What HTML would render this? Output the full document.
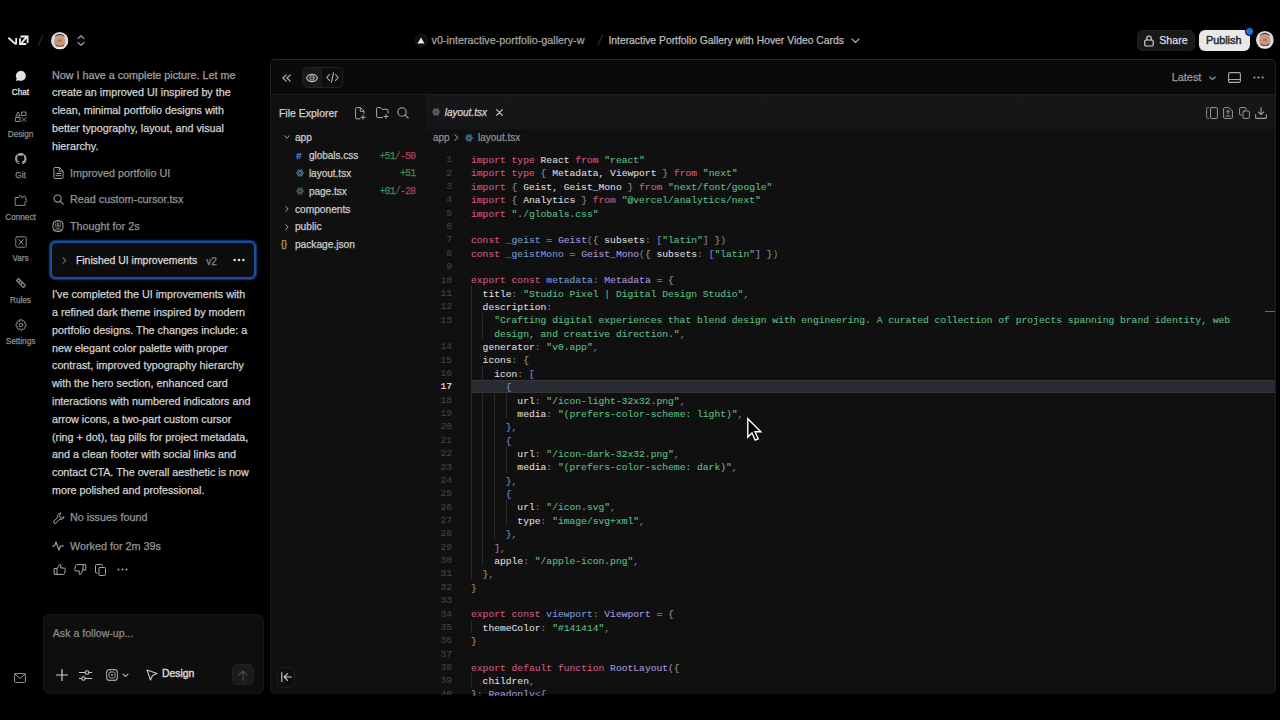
<!DOCTYPE html>
<html><head><meta charset="utf-8">
<style>
*{margin:0;padding:0;box-sizing:border-box}
html,body{width:1280px;height:720px;overflow:hidden;background:#000;font-family:"Liberation Sans",sans-serif;color:#d6d6d6}
body div{-webkit-text-stroke:0.25px currentColor}
.a{position:absolute;white-space:nowrap;line-height:1}
svg.i{position:absolute;overflow:visible;fill:none;stroke-linecap:round;stroke-linejoin:round}
.nav{position:absolute;left:0;width:41px;text-align:center;font-size:8.2px;line-height:1;color:#8c8c8c}
.chat{position:absolute;left:52px;font-size:10.75px;line-height:17.8px;color:#d2d2d2;white-space:nowrap}
.tl{position:absolute;left:70px;font-size:10.8px;line-height:1;color:#949494;white-space:nowrap}
.panel{position:absolute;left:269.5px;top:59px;width:1006px;height:635px;background:#0a0a0b;border-radius:5px;overflow:hidden;border:1px solid #1e1e1f;border-top-color:#2a2a2b}
.code{position:absolute;left:471px;top:154.1px;font-family:"Liberation Mono",monospace;font-size:9.66px;line-height:13.36px;color:#d9d9d9}
.code div{height:13.36px;white-space:pre}
.ln{position:absolute;left:412px;width:40px;top:153.3px;font-family:"Liberation Mono",monospace;font-size:9.66px;line-height:13.36px;color:#424244;text-align:right}
.ln div{height:13.36px}
.code,.ln{height:541.5px;overflow:hidden}
.o{color:#9a88c0}.b{color:#b0946a}.q{color:#8d80c4}.m{color:#8a90a0}.n{color:#7d8ad2}.ln .act{color:#e8e8e8}
.k{color:#cc5883}.s{color:#5bbd82}.p{color:#7e7e82}.v{color:#7399d2}.t{color:#a993dc}
.code div,.ln div,.code,.ln{-webkit-text-stroke:0.12px currentColor}
.fe{position:absolute;font-size:10px;line-height:1;color:#cdcdcd;white-space:nowrap}
.dif{position:absolute;font-family:"Liberation Mono",monospace;font-size:10px;letter-spacing:-0.9px;line-height:1;white-space:nowrap;color:#5a5a5a}
.g{color:#3f8756}.r{color:#ad4058}
.guide{position:absolute;width:1px;background:#2a2a2c}
</style></head>
<body>
<!-- HEADER LEFT -->
<svg class="i" style="left:8px;top:35px" width="21" height="11" viewBox="0 0 21 11">
  <path d="M0.4 2.8 L7.9 9.4 M8.2 2.9 V9.6" stroke="#ececec" stroke-width="1.8" stroke-linecap="butt" stroke-linejoin="miter"/>
  <path d="M12.4 1.5 H19.6 V8 M12 3.2 V9 H18.2 M13.6 7.9 L18.4 2.3" stroke="#ececec" stroke-width="1.8" stroke-linecap="butt" stroke-linejoin="miter"/>
</svg>
<svg class="i" style="left:37px;top:35px" width="8" height="11"><path d="M5.8 1 L1.3 10.3" stroke="#2e2e2e" stroke-width="1.1"/></svg>
<svg class="i" style="left:50.599999999999994px;top:31.500000000000004px" width="17.4" height="17.4" viewBox="0 0 20 20"><defs><clipPath id="c59"><circle cx="10" cy="10" r="10"/></clipPath></defs><g clip-path="url(#c59)"><rect width="20" height="20" fill="#dcdcdc"/><ellipse cx="10" cy="11" rx="6.5" ry="8" fill="#c8977c"/><path d="M4 6 Q10 1 16 6 L15 4 Q10 0 5 4 Z" fill="#4a3430"/><path d="M6 15 Q10 18 14 15" stroke="#5a3a34" stroke-width="1.2" fill="none"/><ellipse cx="10" cy="10" rx="2.5" ry="1.5" fill="#a87a66"/><rect x="0" y="17" width="20" height="3" fill="#e8e8e8"/></g></svg>
<svg class="i" style="left:77px;top:35px" width="8" height="11" viewBox="0 0 8 11"><path d="M1 3.5 L4 0.8 L7 3.5 M1 7.5 L4 10.2 L7 7.5" stroke="#9a9a9a" stroke-width="1.2"/></svg>

<!-- HEADER CENTER -->
<div class="a" style="left:414.5px;top:33.5px;width:13px;height:13px;border-radius:50%;background:#0d0d0d;border:1px solid #1e1e1e"></div>
<svg class="i" style="left:417px;top:36.5px" width="8" height="7" viewBox="0 0 8 7"><path d="M4 0.5 L7.5 6.5 H0.5 Z" fill="#eaeaea"/></svg>
<div class="a" style="left:431.5px;top:35.3px;font-size:10.8px;color:#a3a3a3">v0-interactive-portfolio-gallery-w</div>
<svg class="i" style="left:596px;top:34px" width="8" height="12"><path d="M6.5 1 L2 11" stroke="#2e2e2e" stroke-width="1.1"/></svg>
<div class="a" style="left:608.4px;top:36.2px;font-size:10.35px;color:#bdbdbd">Interactive Portfolio Gallery with Hover Video Cards</div>
<svg class="i" style="left:851px;top:38px" width="9" height="6" viewBox="0 0 9 6"><path d="M1 1 L4.5 4.5 L8 1" stroke="#a8a8a8" stroke-width="1.2"/></svg>

<!-- HEADER RIGHT -->
<div class="a" style="left:1136.5px;top:30.3px;width:58.5px;height:20.5px;border-radius:6px;background:#191919;border:1px solid #222"></div>
<svg class="i" style="left:1144px;top:35px" width="10" height="12" viewBox="0 0 10 12"><rect x="0.8" y="5" width="8.4" height="6" rx="1.2" stroke="#d0d0d0" stroke-width="1.2"/><path d="M2.8 5 V3.2 A2.2 2.2 0 0 1 7.2 3.2 V5" stroke="#d0d0d0" stroke-width="1.2"/></svg>
<div class="a" style="left:1159.3px;top:35.3px;font-size:10.6px;color:#dedede">Share</div>
<div class="a" style="left:1199px;top:30.3px;width:51px;height:20.5px;border-radius:6px;background:#e9e9e9"></div>
<div class="a" style="left:1206px;top:35.3px;font-size:10.8px;color:#2e2e2e;-webkit-text-stroke:0.5px #2e2e2e">Publish</div>
<div class="a" style="left:1245.3px;top:27.3px;width:8.5px;height:8.5px;border-radius:50%;background:#1f6fe5;border:1.2px solid #000"></div>
<svg class="i" style="left:1255.8999999999999px;top:31.300000000000004px" width="17.8" height="17.8" viewBox="0 0 20 20"><defs><clipPath id="c1264"><circle cx="10" cy="10" r="10"/></clipPath></defs><g clip-path="url(#c1264)"><rect width="20" height="20" fill="#dcdcdc"/><ellipse cx="10" cy="11" rx="6.5" ry="8" fill="#c8977c"/><path d="M4 6 Q10 1 16 6 L15 4 Q10 0 5 4 Z" fill="#4a3430"/><path d="M6 15 Q10 18 14 15" stroke="#5a3a34" stroke-width="1.2" fill="none"/><ellipse cx="10" cy="10" rx="2.5" ry="1.5" fill="#a87a66"/><rect x="0" y="17" width="20" height="3" fill="#e8e8e8"/></g></svg>

<!-- NAV -->
<svg class="i" style="left:15px;top:69.5px" width="12" height="12" viewBox="0 0 12 12"><path d="M6 0.8 A5.2 5 0 1 1 3.2 10.2 L0.9 11 L1.6 8.5 A5.2 5 0 0 1 6 0.8 Z" fill="#e4e4e4"/></svg>
<div class="nav" style="top:88.7px;color:#e6e6e6">Chat</div>
<svg class="i" style="left:14.5px;top:111px" width="12" height="12" viewBox="0 0 12 12"><path d="M1 4.5 L3 1 L5 4.5 Z M7 1 H11 V4.5 H7 Z M1 6.5 H5 V10.5 H1 Z M7 6.5 L11 10.5 M11 6.5 L7 10.5" stroke="#8a8a8a" stroke-width="1"/></svg>
<div class="nav" style="top:130.5px">Design</div>
<svg class="i" style="left:14.8px;top:152.8px" width="11.5" height="11.5" viewBox="0 0 16 16"><path fill-rule="evenodd" fill="#a0a0a0" d="M8 0C3.58 0 0 3.58 0 8c0 3.54 2.29 6.53 5.47 7.59.4.07.55-.17.55-.38 0-.19-.01-.82-.01-1.49-2.01.37-2.53-.49-2.69-.94-.09-.23-.48-.94-.82-1.130-.28-.15-.68-.52-.01-.53.63-.01 1.08.58 1.23.82.72 1.21 1.87.87 2.33.66.07-.52.28-.87.51-1.07-1.78-.2-3.640-.89-3.64-3.95 0-.87.31-1.590.82-2.15-.08-.2-.36-1.02.08-2.12 0 0 .67-.21 2.2.82.64-.18 1.32-.27 2-.27.68 0 1.36.09 2 .27 1.53-1.04 2.2-.82 2.2-.82.44 1.1.16 1.92.08 2.12.51.56.82 1.27.82 2.15 0 3.07-1.87 3.75-3.65 3.95.29.25.54.73.54 1.48 0 1.07-.01 1.93-.01 2.2 0 .21.15.46.55.38A8.013 8.013 0 0016 8c0-4.42-3.58-8-8-8z"/></svg>
<div class="nav" style="top:172.2px">Git</div>
<svg class="i" style="left:15px;top:194.5px" width="12" height="11" viewBox="0 0 12 11"><path d="M0.6 2.5 H4 V1.8 A1.3 1.3 0 0 1 6.6 1.8 V2.5 H8 L9 0.8 L11.2 2.8 L10 4.2 H10.4 A1.3 1.3 0 0 1 10.4 6.8 H10 V10.4 H0.6 Z" stroke="#8a8a8a" stroke-width="1"/></svg>
<div class="nav" style="top:213.7px">Connect</div>
<svg class="i" style="left:14.5px;top:235.5px" width="12" height="12" viewBox="0 0 12 12"><rect x="0.8" y="0.8" width="10.4" height="10.4" rx="1.5" stroke="#8a8a8a" stroke-width="1"/><path d="M3.8 3.5 L8.2 8.5 M8.2 3.5 L3.8 8.5" stroke="#8a8a8a" stroke-width="1"/></svg>
<div class="nav" style="top:255.2px">Vars</div>
<svg class="i" style="left:14.5px;top:277px" width="12" height="12" viewBox="0 0 12 12"><path d="M1.5 3.5 L3.5 1.5 L10.5 8.5 L8.5 10.5 Z M4 5 L5 4 M6 7 L7 6" stroke="#8a8a8a" stroke-width="1.1"/></svg>
<div class="nav" style="top:296.7px">Rules</div>
<svg class="i" style="left:14.5px;top:319px" width="12" height="12" viewBox="0 0 12 12"><circle cx="6" cy="6" r="1.8" stroke="#8a8a8a" stroke-width="1"/><path d="M5 0.8 H7 L7.4 2.3 L8.7 1.6 L10.2 3.1 L9.5 4.4 L11 4.9 V7 L9.5 7.5 L10.2 8.9 L8.8 10.3 L7.4 9.6 L7 11.1 H5 L4.6 9.6 L3.2 10.3 L1.8 8.9 L2.5 7.5 L1 7 V5 L2.5 4.5 L1.8 3.1 L3.2 1.7 L4.6 2.4 Z" stroke="#8a8a8a" stroke-width="1"/></svg>
<div class="nav" style="top:338.2px">Settings</div>
<svg class="i" style="left:14px;top:672.5px" width="12" height="10" viewBox="0 0 12 10"><rect x="0.6" y="0.6" width="10.8" height="8.8" rx="1" stroke="#9a9a9a" stroke-width="1"/><path d="M0.8 1 L6 5.5 L11.2 1" stroke="#9a9a9a" stroke-width="1"/></svg>

<!-- CHAT -->
<div class="chat" style="top:66.5px">Now I have a complete picture. Let me<br>create an improved UI inspired by the<br>clean, minimal portfolio designs with<br>better typography, layout, and visual<br>hierarchy.</div>
<div class="a" style="left:40px;top:59px;width:230px;height:30px;background:linear-gradient(#000 0%,rgba(0,0,0,0.35) 40%,rgba(0,0,0,0) 100%)"></div>

<svg class="i" style="left:52.5px;top:167px" width="11" height="12" viewBox="0 0 11 12"><path d="M1 1.2 A0.8 0.8 0 0 1 1.8 0.5 H6.5 L10 4 V10.8 A0.8 0.8 0 0 1 9.2 11.5 H1.8 A0.8 0.8 0 0 1 1 10.8 Z M6.3 0.6 V4.2 H9.9 M3 6.5 H8 M3 8.7 H8" stroke="#a0a0a0" stroke-width="1"/></svg>
<div class="tl" style="top:167.5px">Improved portfolio UI</div>
<svg class="i" style="left:52.5px;top:194px" width="11" height="11" viewBox="0 0 11 11"><circle cx="4.6" cy="4.6" r="3.6" stroke="#a0a0a0" stroke-width="1.1"/><path d="M7.3 7.3 L10.2 10.2" stroke="#a0a0a0" stroke-width="1.1"/></svg>
<div class="tl" style="top:194px">Read custom-cursor.tsx</div>
<svg class="i" style="left:52.2px;top:220px" width="12" height="12" viewBox="0 0 12 12"><path d="M3.5 1.2 Q6 -0.2 8.5 1.2 Q11 2 10.8 4.6 Q11.8 6.5 10.6 8.4 Q10.2 11 7.6 11.2 Q6 12 4.4 11.2 Q1.6 11 1.3 8.4 Q0.2 6.5 1.2 4.6 Q1 2 3.5 1.2 Z" stroke="#a0a0a0" stroke-width="1.05"/><path d="M6 1.5 V5 Q5 6.5 3.2 6.2 M6 5 Q7.2 6.8 8.8 6.4 M4 3.2 Q4.5 4.5 3.4 5 M8 3.2 Q7.5 4.5 8.6 5 M6 6.5 V10.5 M4.2 8.2 Q4.6 9.5 3.6 10.2 M7.8 8.2 Q7.4 9.5 8.4 10.2" stroke="#a0a0a0" stroke-width="0.9"/></svg>
<div class="tl" style="top:221.2px">Thought for 2s</div>

<div class="a" style="left:49.8px;top:241px;width:206px;height:37.5px;border-radius:6px;border:2px solid #1a4fa0;background:#0d0d0e;box-shadow:0 0 1.5px 0.5px #123d7c"></div>
<svg class="i" style="left:61.5px;top:256.5px" width="5" height="7" viewBox="0 0 5 7"><path d="M1 0.8 L4 3.5 L1 6.2" stroke="#9a9a9a" stroke-width="1"/></svg>
<div class="a" style="left:75.9px;top:256px;font-size:10.45px;color:#dadada">Finished UI improvements</div>
<div class="a" style="left:206.2px;top:256.5px;font-size:10px;color:#858585">v2</div>
<svg class="i" style="left:232.5px;top:258px" width="12" height="4" viewBox="0 0 12 4"><circle cx="1.6" cy="2" r="1.3" fill="#e0e0e0"/><circle cx="6" cy="2" r="1.3" fill="#e0e0e0"/><circle cx="10.4" cy="2" r="1.3" fill="#e0e0e0"/></svg>

<div class="chat" style="top:286.3px">I've completed the UI improvements with<br>a refined dark theme inspired by modern<br>portfolio designs. The changes include: a<br>new elegant color palette with proper<br>contrast, improved typography hierarchy<br>with the hero section, enhanced card<br>interactions with numbered indicators and<br>arrow icons, a two-part custom cursor<br>(ring + dot), tag pills for project metadata,<br>and a clean footer with social links and<br>contact CTA. The overall aesthetic is now<br>more polished and professional.</div>

<svg class="i" style="left:52.5px;top:511.5px" width="12" height="12" viewBox="0 0 12 12"><path d="M7.5 1 A3 3 0 0 0 4.8 5.2 L1 9 A1.4 1.4 0 0 0 3 11 L6.8 7.2 A3 3 0 0 0 11 4.5 L9.2 6 L7.2 5.8 L6.8 3.4 Z" stroke="#a0a0a0" stroke-width="1"/></svg>
<div class="tl" style="top:512.3px">No issues found</div>
<svg class="i" style="left:52px;top:540.5px" width="12" height="10" viewBox="0 0 12 10"><path d="M0.5 5 H2.5 L4 1 L7 9 L8.5 5 H11.5" stroke="#a8a8a8" stroke-width="1.1"/></svg>
<div class="tl" style="top:540.5px">Worked for 2m 39s</div>

<svg class="i" style="left:53.5px;top:563.5px" width="12" height="11" viewBox="0 0 12 11"><path d="M0.6 4.5 H3 V10.4 H0.6 Z M3 4.5 L5.5 0.6 A1.2 1.2 0 0 1 7 1.8 L6.5 4 H10 A1.3 1.3 0 0 1 11.3 5.5 L10.5 9.5 A1.2 1.2 0 0 1 9.3 10.4 H3" stroke="#a8a8a8" stroke-width="1"/></svg>
<svg class="i" style="left:74px;top:564px" width="12" height="11" viewBox="0 0 12 11"><path d="M11.4 6 H9 V0.6 H11.4 Z M9 6 L6.5 10.4 A1.2 1.2 0 0 1 5 9.2 L5.5 7 H2 A1.3 1.3 0 0 1 0.7 5.5 L1.5 1.5 A1.2 1.2 0 0 1 2.7 0.6 H9" stroke="#a8a8a8" stroke-width="1"/></svg>
<svg class="i" style="left:95px;top:563.5px" width="12" height="12" viewBox="0 0 12 12"><rect x="4" y="3.5" width="6.5" height="8" rx="1" stroke="#a8a8a8" stroke-width="1"/><path d="M7.5 1.8 V1.5 A1 1 0 0 0 6.5 0.5 H1.5 A1 1 0 0 0 0.5 1.5 V8 A1 1 0 0 0 1.5 9 H2.5" stroke="#a8a8a8" stroke-width="1"/></svg>
<svg class="i" style="left:116.5px;top:567.5px" width="11" height="3" viewBox="0 0 11 3"><circle cx="1.5" cy="1.5" r="1" fill="#a8a8a8"/><circle cx="5.5" cy="1.5" r="1" fill="#a8a8a8"/><circle cx="9.5" cy="1.5" r="1" fill="#a8a8a8"/></svg>

<!-- INPUT -->
<div class="a" style="left:43px;top:614.3px;width:221px;height:79.5px;border-radius:6px;background:#0e0e0f;border:1px solid #171718"></div>
<div class="a" style="left:52.8px;top:627.5px;font-size:10.6px;color:#8a8a8a">Ask a follow-up...</div>
<svg class="i" style="left:56px;top:669px" width="12" height="12" viewBox="0 0 12 12"><path d="M6 0.5 V11.5 M0.5 6 H11.5" stroke="#d0d0d0" stroke-width="1.2"/></svg>
<svg class="i" style="left:79px;top:668.5px" width="13" height="13" viewBox="0 0 13 13"><path d="M0.5 3.5 H12.5 M0.5 9.5 H12.5" stroke="#c8c8c8" stroke-width="1.1"/><circle cx="8" cy="3.5" r="1.8" fill="#0e0e0f" stroke="#c8c8c8" stroke-width="1.1"/><circle cx="4.5" cy="9.5" r="1.8" fill="#0e0e0f" stroke="#c8c8c8" stroke-width="1.1"/></svg>
<svg class="i" style="left:105.5px;top:668.5px" width="12" height="12" viewBox="0 0 12 12"><rect x="0.6" y="0.6" width="10.8" height="10.8" rx="3" stroke="#a0a0a0" stroke-width="1.1"/><rect x="3" y="3" width="6" height="6" rx="1.5" stroke="#a0a0a0" stroke-width="1"/><circle cx="6" cy="6" r="1" fill="#a0a0a0"/></svg>
<svg class="i" style="left:121.5px;top:672.5px" width="7" height="5" viewBox="0 0 7 5"><path d="M1 1 L3.5 3.5 L6 1" stroke="#a0a0a0" stroke-width="1.1"/></svg>
<svg class="i" style="left:145.5px;top:668.5px" width="12" height="12" viewBox="0 0 12 12"><path d="M1 1 L11 4.5 L6.5 6.5 L4.5 11 Z" stroke="#c8c8c8" stroke-width="1.1"/></svg>
<div class="a" style="left:161.9px;top:669.3px;font-size:10.45px;color:#d4d4d4;-webkit-text-stroke:0.45px #d4d4d4">Design</div>
<div class="a" style="left:232px;top:664.3px;width:22px;height:21px;border-radius:5px;background:#1b1b1c;border:1px solid #222"></div>
<svg class="i" style="left:238px;top:669.5px" width="10" height="11" viewBox="0 0 10 11"><path d="M5 10.5 V1 M1 5 L5 1 L9 5" stroke="#4a4a4a" stroke-width="1.2"/></svg>

<!-- PANEL -->
<div class="panel"></div>
<div class="a" style="left:270.5px;top:93.5px;width:1004.5px;height:600px;background:#101011;border-top:1px solid #1c1c1e;border-radius:0 0 5px 5px"></div>
<div class="a" style="left:426px;top:94.5px;width:849px;height:599px;background:#101011;border-radius:0 0 5px 0"></div>
<div class="a" style="left:426px;top:94.5px;width:849px;height:35px;background:linear-gradient(#171719,#141416)"></div>

<!-- toolbar -->
<svg class="i" style="left:281.5px;top:73.5px" width="9" height="8" viewBox="0 0 9 8"><path d="M4.2 0.8 L1 4 L4.2 7.2 M8.2 0.8 L5 4 L8.2 7.2" stroke="#b8b8b8" stroke-width="1.1"/></svg>
<div class="a" style="left:301.8px;top:67px;width:41.5px;height:20.5px;border-radius:5px;border:1px solid #222224;background:#0d0d0e"></div>
<div class="a" style="left:302.8px;top:68px;width:19.5px;height:18.5px;border-radius:4px 0 0 4px;background:#19191a"></div>
<svg class="i" style="left:305.5px;top:72.6px" width="12" height="10" viewBox="0 0 12 10"><path d="M0.6 5 C2.5 0.2 9.5 0.2 11.4 5 C9.5 9.8 2.5 9.8 0.6 5 Z" stroke="#bdbdbd" stroke-width="1.1"/><circle cx="6" cy="5" r="2.2" stroke="#bdbdbd" stroke-width="1"/><circle cx="6" cy="5" r="0.6" fill="#bdbdbd"/></svg>
<svg class="i" style="left:326px;top:72px" width="13" height="11" viewBox="0 0 13 11"><path d="M3.5 2.5 L0.8 5.5 L3.5 8.5 M9.5 2.5 L12.2 5.5 L9.5 8.5 M7.5 0.8 L5.5 10.2" stroke="#b8b8b8" stroke-width="1.1"/></svg>

<div class="a" style="left:1171.7px;top:72.3px;font-size:10.9px;color:#9c9c9c">Latest</div>
<svg class="i" style="left:1208.5px;top:75.5px" width="7" height="5" viewBox="0 0 7 5"><path d="M0.8 1 L3.5 3.7 L6.2 1" stroke="#a0a0a0" stroke-width="1.1"/></svg>
<svg class="i" style="left:1228.3px;top:72px" width="13" height="11" viewBox="0 0 13 11"><rect x="0.6" y="0.6" width="11.8" height="9.8" rx="1.4" stroke="#a8a8a8" stroke-width="1.1"/><path d="M0.8 7.5 H12.2" stroke="#a8a8a8" stroke-width="1.1"/></svg>
<svg class="i" style="left:1252.8px;top:75.8px" width="11" height="3" viewBox="0 0 11 3"><circle cx="1.4" cy="1.5" r="1.05" fill="#a8a8a8"/><circle cx="5.5" cy="1.5" r="1.05" fill="#a8a8a8"/><circle cx="9.6" cy="1.5" r="1.05" fill="#a8a8a8"/></svg>

<!-- file explorer -->
<div class="a" style="left:278.9px;top:107.5px;font-size:10.5px;color:#d2d2d2">File Explorer</div>
<svg class="i" style="left:355px;top:106.5px" width="11" height="13" viewBox="0 0 11 13"><path d="M5 11.8 H1.5 A0.9 0.9 0 0 1 0.6 10.9 V1.5 A0.9 0.9 0 0 1 1.5 0.6 H5.5 L9 4.1 V6.5 M5.3 0.8 V4.3 H8.8 M8 8.3 V12.3 M6 10.3 H10" stroke="#a8a8a8" stroke-width="1"/></svg>
<svg class="i" style="left:375.5px;top:107px" width="13" height="12" viewBox="0 0 13 12"><path d="M6.5 10.5 H1.5 A0.9 0.9 0 0 1 0.6 9.6 V1.5 A0.9 0.9 0 0 1 1.5 0.6 H4.5 L6 2.3 H11 A0.9 0.9 0 0 1 11.9 3.2 V6 M10 7.5 V11.5 M8 9.5 H12" stroke="#a8a8a8" stroke-width="1"/></svg>
<svg class="i" style="left:397px;top:106.5px" width="12" height="12" viewBox="0 0 12 12"><circle cx="5" cy="5" r="4.2" stroke="#a8a8a8" stroke-width="1.1"/><path d="M8.1 8.1 L11.2 11.2" stroke="#a8a8a8" stroke-width="1.1"/></svg>

<svg class="i" style="left:284.4px;top:135px" width="6" height="4" viewBox="0 0 6 4"><path d="M0.6 0.7 L3 3.2 L5.4 0.7" stroke="#a0a0a0" stroke-width="1"/></svg>
<div class="fe" style="left:294.9px;top:133.2px;font-size:10.2px">app</div>

<div class="a" style="left:296px;top:150.6px;font-size:9.5px;font-weight:bold;color:#4f86b8;font-style:italic">#</div>
<div class="fe" style="left:308.9px;top:151.2px">globals.css</div>
<div class="dif" style="left:379.5px;top:151.5px"><span class="g">+51</span>/<span class="r">-50</span></div>

<svg class="i" style="left:296px;top:169px" width="8" height="8" viewBox="0 0 8 8"><ellipse cx="4" cy="4" rx="3.6" ry="1.4" stroke="#4d7f98" stroke-width="0.8"/><ellipse cx="4" cy="4" rx="3.6" ry="1.4" transform="rotate(60 4 4)" stroke="#4d7f98" stroke-width="0.8"/><ellipse cx="4" cy="4" rx="3.6" ry="1.4" transform="rotate(-60 4 4)" stroke="#4d7f98" stroke-width="0.8"/></svg>
<div class="fe" style="left:308.9px;top:169px">layout.tsx</div>
<div class="dif" style="left:400px;top:169.3px"><span class="g">+51</span></div>

<svg class="i" style="left:296px;top:187px" width="8" height="8" viewBox="0 0 8 8"><ellipse cx="4" cy="4" rx="3.6" ry="1.4" stroke="#4a6a78" stroke-width="0.8"/><ellipse cx="4" cy="4" rx="3.6" ry="1.4" transform="rotate(60 4 4)" stroke="#4a6a78" stroke-width="0.8"/><ellipse cx="4" cy="4" rx="3.6" ry="1.4" transform="rotate(-60 4 4)" stroke="#4a6a78" stroke-width="0.8"/></svg>
<div class="fe" style="left:308.9px;top:186.8px">page.tsx</div>
<div class="dif" style="left:379.5px;top:187.1px"><span class="g">+81</span>/<span class="r">-28</span></div>

<svg class="i" style="left:285px;top:206px" width="4" height="6" viewBox="0 0 4 6"><path d="M0.7 0.6 L3.2 3 L0.7 5.4" stroke="#a0a0a0" stroke-width="1"/></svg>
<div class="fe" style="left:294.9px;top:204.6px;font-size:10.2px">components</div>
<svg class="i" style="left:285px;top:223.7px" width="4" height="6" viewBox="0 0 4 6"><path d="M0.7 0.6 L3.2 3 L0.7 5.4" stroke="#a0a0a0" stroke-width="1"/></svg>
<div class="fe" style="left:294.9px;top:222.3px;font-size:10.2px">public</div>
<div class="a" style="left:281px;top:239.5px;font-size:9px;color:#c8a548">{}</div>
<div class="fe" style="left:294.9px;top:240.1px;font-size:10.2px">package.json</div>

<!-- tabs -->
<svg class="i" style="left:432px;top:108px" width="8" height="8" viewBox="0 0 8 8"><ellipse cx="4" cy="4" rx="3.6" ry="1.4" stroke="#6a7a80" stroke-width="0.8"/><ellipse cx="4" cy="4" rx="3.6" ry="1.4" transform="rotate(60 4 4)" stroke="#6a7a80" stroke-width="0.8"/><ellipse cx="4" cy="4" rx="3.6" ry="1.4" transform="rotate(-60 4 4)" stroke="#6a7a80" stroke-width="0.8"/></svg>
<div class="a" style="left:444.7px;top:107.5px;font-size:10px;font-style:italic;color:#d4d4d4">layout.tsx</div>
<svg class="i" style="left:495.5px;top:108.5px" width="7" height="7" viewBox="0 0 7 7"><path d="M0.6 0.6 L6.4 6.4 M6.4 0.6 L0.6 6.4" stroke="#cfcfcf" stroke-width="1.1"/></svg>

<svg class="i" style="left:1206px;top:106.5px" width="12" height="12" viewBox="0 0 12 12"><rect x="4.5" y="0.6" width="6.9" height="10.8" rx="1.2" stroke="#9a9a9a" stroke-width="1"/><path d="M2.5 0.6 H1.6 A1 1 0 0 0 0.6 1.6 V10.4 A1 1 0 0 0 1.6 11.4 H2.5" stroke="#9a9a9a" stroke-width="1" stroke-dasharray="1.5 1"/></svg>
<svg class="i" style="left:1223px;top:106.5px" width="10" height="12" viewBox="0 0 10 12"><path d="M0.6 1.5 A0.9 0.9 0 0 1 1.5 0.6 H6 L9.4 4 V10.5 A0.9 0.9 0 0 1 8.5 11.4 H1.5 A0.9 0.9 0 0 1 0.6 10.5 Z M5 3.5 V7 M3.3 5 L5 3.3 L6.7 5 M3 9 H7" stroke="#9a9a9a" stroke-width="1"/></svg>
<svg class="i" style="left:1239px;top:106.5px" width="11" height="12" viewBox="0 0 11 12"><rect x="4" y="4" width="6.4" height="7.4" rx="1" stroke="#9a9a9a" stroke-width="1"/><path d="M7 2.5 V1.6 A1 1 0 0 0 6 0.6 H1.6 A1 1 0 0 0 0.6 1.6 V7 A1 1 0 0 0 1.6 8 H2.5" stroke="#9a9a9a" stroke-width="1"/></svg>
<svg class="i" style="left:1255px;top:106.5px" width="12" height="12" viewBox="0 0 12 12"><path d="M6 0.6 V7.5 M3.3 5 L6 7.7 L8.7 5 M0.6 7.5 V10.4 A1 1 0 0 0 1.6 11.4 H10.4 A1 1 0 0 0 11.4 10.4 V7.5" stroke="#9a9a9a" stroke-width="1.1"/></svg>

<!-- breadcrumb -->
<div class="a" style="left:433px;top:132.5px;font-size:10px;color:#8e8e8e">app</div>
<svg class="i" style="left:453.8px;top:134px" width="5" height="7" viewBox="0 0 5 7"><path d="M0.8 0.8 L4 3.5 L0.8 6.2" stroke="#a0a0a0" stroke-width="1"/></svg>
<svg class="i" style="left:465px;top:133.5px" width="8" height="8" viewBox="0 0 8 8"><ellipse cx="4" cy="4" rx="3.6" ry="1.4" stroke="#4d7f98" stroke-width="0.8"/><ellipse cx="4" cy="4" rx="3.6" ry="1.4" transform="rotate(60 4 4)" stroke="#4d7f98" stroke-width="0.8"/><ellipse cx="4" cy="4" rx="3.6" ry="1.4" transform="rotate(-60 4 4)" stroke="#4d7f98" stroke-width="0.8"/></svg>
<div class="a" style="left:478px;top:132.5px;font-size:10px;color:#8e8e8e">layout.tsx</div>

<!-- active line + guides -->
<div class="a" style="left:471px;top:379.5px;width:804px;height:13.3px;background:#282b32;border-top:1px solid #37373a;border-bottom:1px solid #343437"></div>
<div class="guide" style="left:472.3px;top:446px;height:0"></div>
<div class="guide" style="left:470.8px;top:285.90px;height:293.92px"></div>
<div class="guide" style="left:470.8px;top:619.90px;height:13.36px"></div>
<div class="guide" style="left:470.8px;top:673.34px;height:13.36px"></div>
<div class="guide" style="left:482.4px;top:312.62px;height:26.72px"></div>
<div class="guide" style="left:482.4px;top:366.06px;height:200.40px"></div>
<div class="guide" style="left:494.0px;top:379.42px;height:160.32px"></div>
<div class="guide" style="left:505.6px;top:392.78px;height:26.72px"></div>
<div class="guide" style="left:505.6px;top:446.22px;height:26.72px"></div>
<div class="guide" style="left:505.6px;top:499.66px;height:26.72px"></div>
<div class="code">
<div><span class="k">import</span> <span class="k">type</span> React <span class="k">from</span> <span class="s">"react"</span></div>
<div><span class="k">import</span> <span class="k">type</span> <span class="m">{</span> Metadata, Viewport <span class="m">}</span> <span class="k">from</span> <span class="s">"next"</span></div>
<div><span class="k">import</span> <span class="m">{</span> Geist, Geist_Mono <span class="m">}</span> <span class="k">from</span> <span class="s">"next/font/google"</span></div>
<div><span class="k">import</span> <span class="m">{</span> Analytics <span class="m">}</span> <span class="k">from</span> <span class="s">"@vercel/analytics/next"</span></div>
<div><span class="k">import</span> <span class="s">"./globals.css"</span></div>
<div></div>
<div><span class="k">const</span> <span class="v">_geist</span> <span class="k">=</span> <span class="t">Geist</span><span class="p">(</span><span class="b">{</span> subsets<span class="p">:</span> <span class="q">[</span><span class="s">"latin"</span><span class="q">]</span> <span class="b">}</span><span class="p">)</span></div>
<div><span class="k">const</span> <span class="v">_geistMono</span> <span class="k">=</span> <span class="t">Geist_Mono</span><span class="p">(</span><span class="b">{</span> subsets<span class="p">:</span> <span class="q">[</span><span class="s">"latin"</span><span class="q">]</span> <span class="b">}</span><span class="p">)</span></div>
<div></div>
<div><span class="k">export</span> <span class="k">const</span> <span class="v">metadata</span><span class="p">:</span> <span class="t">Metadata</span> <span class="k">=</span> <span class="b">{</span></div>
<div>  title<span class="p">:</span> <span class="s">"Studio Pixel | Digital Design Studio"</span><span class="p">,</span></div>
<div>  description<span class="p">:</span></div>
<div>    <span class="s">"Crafting digital experiences that blend design with engineering. A curated collection of projects spanning brand identity, web</span></div>
<div>    <span class="s">design, and creative direction."</span><span class="p">,</span></div>
<div>  generator<span class="p">:</span> <span class="s">"v0.app"</span><span class="p">,</span></div>
<div>  icons<span class="p">:</span> <span class="b">{</span></div>
<div>    icon<span class="p">:</span> <span class="q">[</span></div>
<div>      <span class="n">{</span></div>
<div>        url<span class="p">:</span> <span class="s">"/icon-light-32x32.png"</span><span class="p">,</span></div>
<div>        media<span class="p">:</span> <span class="s">"(prefers-color-scheme: light)"</span><span class="p">,</span></div>
<div>      <span class="n">}</span><span class="p">,</span></div>
<div>      <span class="n">{</span></div>
<div>        url<span class="p">:</span> <span class="s">"/icon-dark-32x32.png"</span><span class="p">,</span></div>
<div>        media<span class="p">:</span> <span class="s">"(prefers-color-scheme: dark)"</span><span class="p">,</span></div>
<div>      <span class="n">}</span><span class="p">,</span></div>
<div>      <span class="n">{</span></div>
<div>        url<span class="p">:</span> <span class="s">"/icon.svg"</span><span class="p">,</span></div>
<div>        type<span class="p">:</span> <span class="s">"image/svg+xml"</span><span class="p">,</span></div>
<div>      <span class="n">}</span><span class="p">,</span></div>
<div>    <span class="q">]</span><span class="p">,</span></div>
<div>    apple<span class="p">:</span> <span class="s">"/apple-icon.png"</span><span class="p">,</span></div>
<div>  <span class="b">}</span><span class="p">,</span></div>
<div><span class="b">}</span></div>
<div></div>
<div><span class="k">export</span> <span class="k">const</span> <span class="v">viewport</span><span class="p">:</span> <span class="t">Viewport</span> <span class="k">=</span> <span class="b">{</span></div>
<div>  themeColor<span class="p">:</span> <span class="s">"#141414"</span><span class="p">,</span></div>
<div><span class="b">}</span></div>
<div></div>
<div><span class="k">export</span> <span class="k">default</span> <span class="k">function</span> <span class="t">RootLayout</span><span class="o">(</span><span class="b">{</span></div>
<div>  children<span class="p">,</span></div>
<div><span class="b">}</span><span class="p">: </span><span class="t">Readonly</span><span class="p">&lt;</span><span class="o">{</span></div>
</div>
<div class="ln"><div>1</div><div>2</div><div>3</div><div>4</div><div>5</div><div>6</div><div>7</div><div>8</div><div>9</div><div>10</div><div>11</div><div>12</div><div>13</div><div></div><div>14</div><div>15</div><div>16</div><div class="act">17</div><div>18</div><div>19</div><div>20</div><div>21</div><div>22</div><div>23</div><div>24</div><div>25</div><div>26</div><div>27</div><div>28</div><div>29</div><div>30</div><div>31</div><div>32</div><div>33</div><div>34</div><div>35</div><div>36</div><div>37</div><div>38</div><div>39</div><div>40</div></div>
<!-- scrollbar mark -->
<div class="a" style="left:1264.5px;top:310.5px;width:10px;height:1.5px;background:#6a6a6a"></div>
<!-- collapse -->
<div class="a" style="left:276.8px;top:667px;width:18px;height:20.5px;border-radius:4px;background:#0f0f10;border:1px solid #1c1c1d"></div>
<svg class="i" style="left:280.5px;top:672px" width="11" height="10" viewBox="0 0 11 10"><path d="M0.8 0.5 V9.5 M10.2 5 H3.2 M6.5 1.7 L3.2 5 L6.5 8.3" stroke="#d0d0d0" stroke-width="1.1"/></svg>
<!-- cursor -->
<svg class="i" style="left:746.5px;top:417.5px" width="16" height="24" viewBox="0 0 16 24"><path d="M0.8 0.8 V19 L5 15 L8.2 22 L11.2 20.8 L8 13.8 H13.8 Z" fill="#000" stroke="#fff" stroke-width="1.4" stroke-linejoin="miter"/></svg>
</body></html>
